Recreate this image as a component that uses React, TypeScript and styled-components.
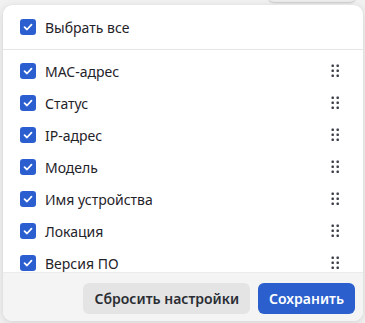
import React, { useState } from "react";
import styled, { createGlobalStyle } from "styled-components";

const GlobalStyle = createGlobalStyle`
  html, body {
    margin: 0;
    padding: 0;
    background: #f1f1f1;
    font-family: "Noto Sans", "Open Sans", sans-serif;
  }
`;

const Page = styled.div`
  position: relative;
  width: 365px;
  height: 323px;
  overflow: hidden;
`;

const BehindBar = styled.div`
  position: absolute;
  top: -20px;
  left: 268px;
  width: 88px;
  height: 22px;
  border-radius: 6px;
  background: #ececec;
  box-shadow: 0 1px 2px rgba(0, 0, 0, 0.18);
`;

const Panel = styled.div`
  position: absolute;
  top: 5px;
  left: 3px;
  width: 360px;
  height: 316px;
  background: #fff;
  border-radius: 9px;
  box-shadow: 0 2px 8px rgba(0, 0, 0, 0.12), 0 0 1px rgba(0, 0, 0, 0.1);
  display: flex;
  flex-direction: column;
  overflow: hidden;
`;

const Header = styled.div`
  height: 44px;
  flex-shrink: 0;
  display: flex;
  align-items: center;
  padding-left: 17px;
  border-bottom: 1px solid #e6e6e6;
`;

const List = styled.div`
  flex: 1;
  overflow: hidden;
  padding-top: 5px;
`;

const Row = styled.label`
  height: 32px;
  display: flex;
  align-items: center;
  padding: 0 24px 0 17px;
  cursor: pointer;
`;

const Box = styled.span<{ $on: boolean }>`
  width: 16px;
  height: 16px;
  border-radius: 3px;
  flex-shrink: 0;
  display: flex;
  align-items: center;
  justify-content: center;
  background: ${(p) => (p.$on ? "#2b5fcf" : "#fff")};
  border: ${(p) => (p.$on ? "none" : "1px solid #9aa0a8")};
  box-sizing: border-box;
`;

const Label = styled.span`
  margin-left: 9px;
  font-size: 14px;
  color: #1f2329;
  flex: 1;
  white-space: nowrap;
`;

const Grip = styled.svg`
  flex-shrink: 0;
  margin-top: -2px;
`;

const Footer = styled.div`
  height: 49px;
  flex-shrink: 0;
  background: #f4f4f4;
  border-top: 1px solid #ebebeb;
  box-sizing: border-box;
  display: flex;
  justify-content: flex-end;
  align-items: flex-start;
  gap: 8px;
  padding: 10px 8px 0 0;
`;

const Button = styled.button<{ $primary?: boolean }>`
  height: 31px;
  border: none;
  border-radius: 6px;
  padding: 0 11px;
  font-family: "Noto Sans", "Open Sans", sans-serif;
  font-size: 14px;
  font-weight: 600;
  cursor: pointer;
  background: ${(p) => (p.$primary ? "#2a5fcd" : "#e4e4e4")};
  color: ${(p) => (p.$primary ? "#fff" : "#2a2d33")};
`;

const Check = () => (
  <svg width="10" height="8" viewBox="0 0 10 8">
    <path d="M1.5 4.2 L4 6.5 L8.5 1.6" fill="none" stroke="#fff" strokeWidth="1.7" strokeLinecap="round" strokeLinejoin="round" />
  </svg>
);

const DragDots = () => (
  <Grip width="8" height="13" viewBox="0 0 8 13">
    {[0, 5, 10].map((y) =>
      [0, 5].map((x) => <rect key={`${x}-${y}`} x={x + 0.5} y={y + 0.5} width="2.4" height="2.4" rx="0.6" fill="#3a3f47" />)
    )}
  </Grip>
);

const columns = [
  "MAC-адрес",
  "Статус",
  "IP-адрес",
  "Модель",
  "Имя устройства",
  "Локация",
  "Версия ПО",
];

export default function App() {
  const [checked, setChecked] = useState<boolean[]>(columns.map(() => true));
  const all = checked.every(Boolean);

  return (
    <>
      <GlobalStyle />
      <Page>
        <BehindBar />
        <Panel>
          <Header>
            <Row as="div" style={{ padding: 0 }} onClick={() => setChecked(columns.map(() => !all))}>
              <Box $on={all}>{all && <Check />}</Box>
              <Label>Выбрать все</Label>
            </Row>
          </Header>
          <List>
            {columns.map((c, i) => (
              <Row key={c} onClick={() => setChecked(checked.map((v, j) => (j === i ? !v : v)))}>
                <Box $on={checked[i]}>{checked[i] && <Check />}</Box>
                <Label>{c}</Label>
                <DragDots />
              </Row>
            ))}
          </List>
          <Footer>
            <Button>Сбросить настройки</Button>
            <Button $primary>Сохранить</Button>
          </Footer>
        </Panel>
      </Page>
    </>
  );
}
